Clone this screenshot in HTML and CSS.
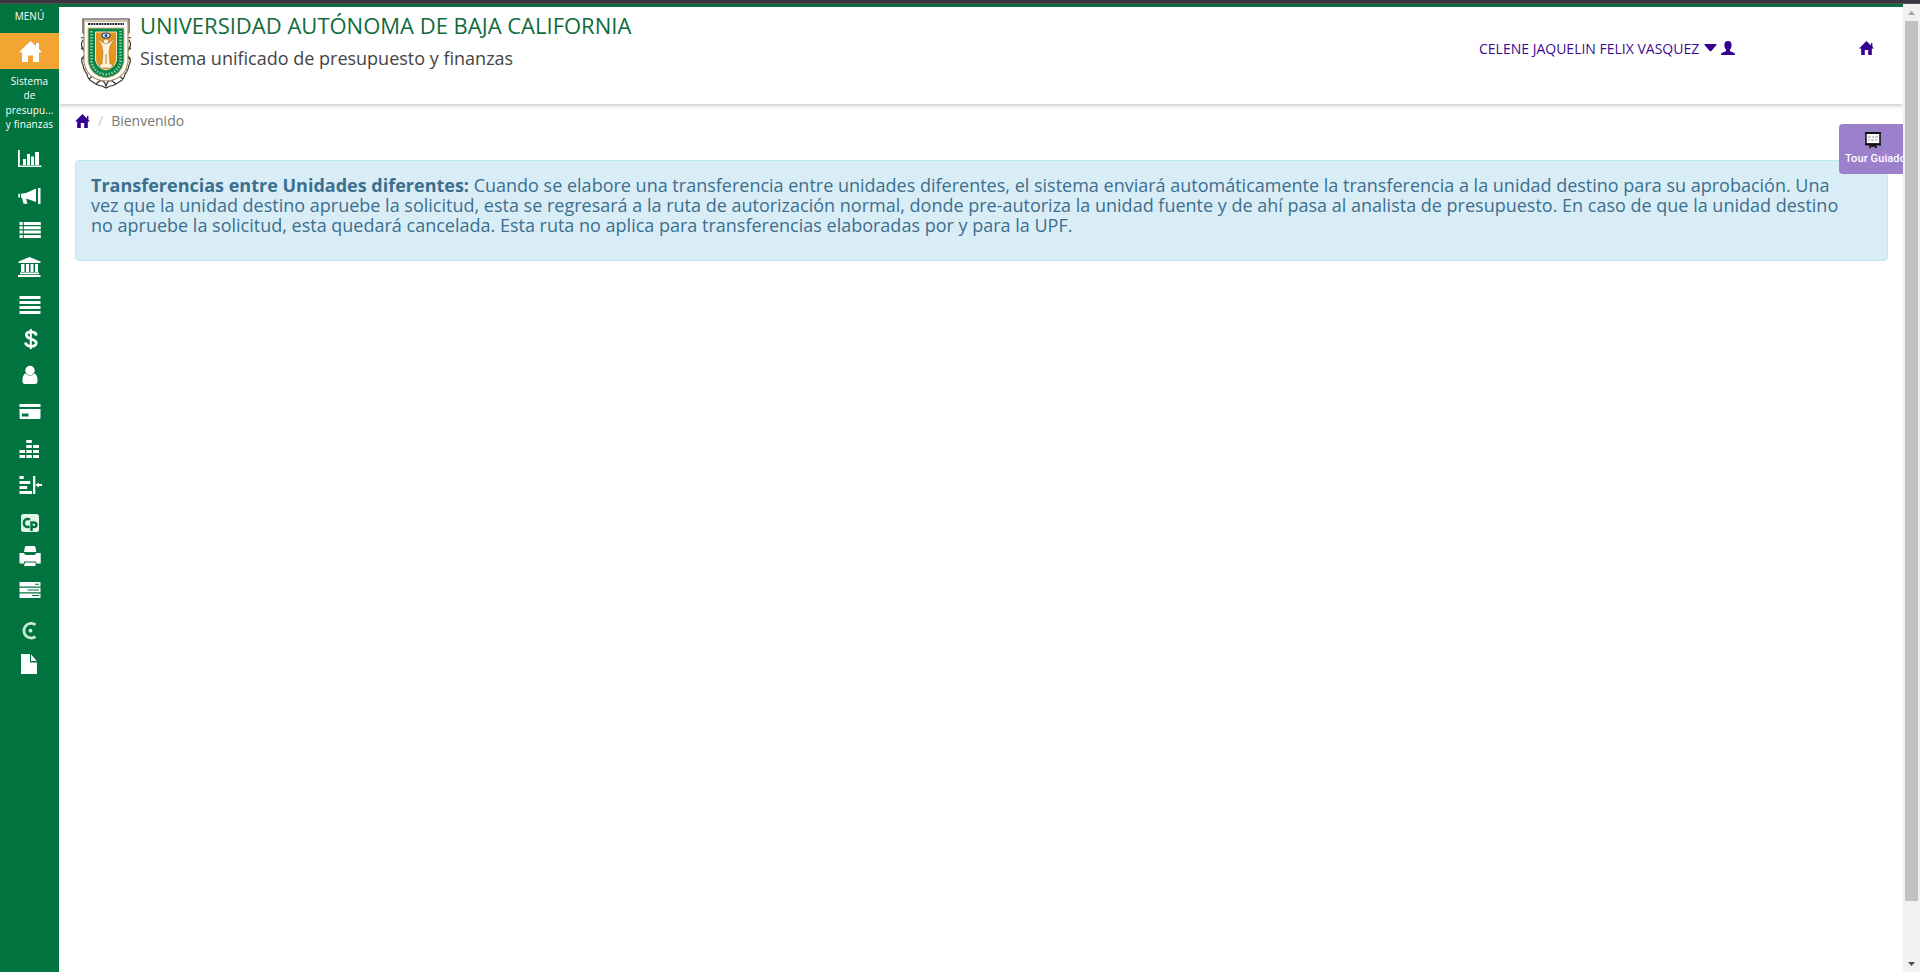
FILE: index.html
```html
<!DOCTYPE html>
<html lang="es">
<head>
<meta charset="utf-8">
<title>Sistema unificado de presupuesto y finanzas</title>
<link rel="stylesheet" href="styles.css">
</head>
<body>
<svg class="defs" aria-hidden="true">
  <symbol id="home" viewBox="0 0 15 15"><path d="M7.500 0L12 4.400V2h1.400v3.800L15 7.600H12.800V14H9.200V9H5.800v5H2.200V7.600H0z"/></symbol>
</svg>
<div class="topline"></div>
<div class="window">
  <nav class="sidebar">
    <div class="menu-label">MENÚ</div>
    <a class="active"><svg width="23" height="22" viewBox="0 0 23 22"><path d="M11.500 0L17 5.200V2h3v6l3 3.200h-3V21h-6v-6.500H9V21H3v-9.800H0z"/></svg></a>
    <div class="menu-title">Sistema<br>de<br>presupu...<br>y finanzas</div>
    <div class="icons">
      <svg viewBox="0 0 24 24"><path d="M0 4h1.800v15.500H23.500V21H0zM5 13h3v6H5zM9 8h3v11H9zM13 10.500h3V19h-3zM17 6h4v13h-4z"/></svg>
      <svg viewBox="0 0 24 24"><path d="M18 4.500V18L8 14.500l1.500 5.200H5.500L4 14H3V9.700l5-.7zM20 4h2.500v16H20zM.3 9.800H2v3.700H.3z"/></svg>
      <svg viewBox="0 0 24 24"><path d="M1.500 4h3.300v3H1.500zm0 4.300h3.300v3H1.500zm0 4.300h3.300v3H1.500zm0 4.300h3.300v3H1.500zM5.800 4h17v3h-17zm0 4.300h17v3h-17zm0 4.300h17v3h-17zm0 4.300h17v3h-17z"/></svg>
      <svg viewBox="0 0 24 24"><path d="M11.500 2L22.500 6.500V8H.5V6.500zM3 9h3.500v8H3zM8 9h3v8H8zm4.500 0h3v8h-3zM17 9h3v8h-3zM2 17.500h19v1.700H2zM0 20h22.500v2H0z"/></svg>
      <svg viewBox="0 0 24 24"><path d="M1.500 3h21v3h-21zm0 5h21v3h-21zm0 5h21v3h-21zm0 5h21v3h-21z"/></svg>
      <svg viewBox="0 0 24 24"><path class="stroke" d="M18.300 8.500C17.800 3.700 8.300 3.600 8.300 8s10 3.500 10 8-10 4.400-10.800-.5"/><path d="M11.800 2h2v20h-2z"/></svg>
      <svg viewBox="0 0 24 24"><circle cx="12" cy="7.500" r="4.700"/><path d="M7.600 10.500Q12 14.800 16.400 10.500q3.200 1 3.200 7.500 0 3-2.600 3H7q-2.600 0-2.600-3 0-6.500 3.200-7.500z"/></svg>
      <svg viewBox="0 0 24 24"><path d="M1.500 5h21v3h-21zM1.500 10h21v8.500q0 1.500-1.500 1.500H3q-1.500 0-1.500-1.500zM4 14.500v3h6.500v-3z" fill-rule="evenodd"/></svg>
      <svg viewBox="0 0 24 24"><path d="M8.300 2h5.500v3H8.300zm0 5h5.500v3H8.300zm6.700 0h6v3h-6zM1.500 12H7v3H1.500zm6.800 0h5.500v3H8.300zm6.700 0h6v3h-6zM1.500 17H7v3H1.500zm6.800 0h5.500v3H8.300zm6.700 0h6v3h-6z"/></svg>
      <svg viewBox="0 0 24 24"><path d="M1.500 2h4.200v3H1.500zm0 5h10.800v3H1.500zm0 5h7.700v3H1.500zm0 5h12.500v3H1.500zM15 2h2.300v18H15zM17.300 11l3.500-2.500V10h3.200v2h-3.200v1.500z"/></svg>
      <svg viewBox="0 0 24 24" class="cp"><rect x="3" y="3" width="18" height="18" rx="2.500"/><path d="M12 8.500C9 7 5.800 8.500 5.800 12s3 4.700 5.700 3.500M13.500 20v-8.500h2q3 0 3 2.300T15.500 16h-2"/></svg>
      <svg viewBox="0 0 24 24"><path d="M8 2h8q1.200 0 1.500 1.500L18.300 8H6l.8-4.500Q7 2 8 2zM1.500 9h4.300q1 2 2.500 2h7.600q1.500 0 2.500-2h4.300v10.500h-4.500v-2H6v2H1.500zM7 18.500h10.500V22H6z"/></svg>
      <svg viewBox="0 0 24 24"><path fill-rule="evenodd" d="M1.500 4h21v4.600h-21zm15.500 1.700v1h4v-1zM1.500 9.700h21v4.600h-21zm8 1.700v1H21v-1zM1.500 15.400h21V20h-21zm12.500 1.700v1h7v-1z"/></svg>
      <svg viewBox="0 0 24 24" class="ring"><path d="M17.500 5.800A7.300 7.300 0 1 0 17.500 17.600"/><circle cx="12.500" cy="11.700" r="1.900"/></svg>
      <svg viewBox="0 0 24 24"><path d="M3 2h9v8.500h7V22H3zM13 2.300L18.800 9H13z"/></svg>
    </div>
  </nav>
  <div class="page">
    <header class="header">
      <svg class="shield" viewBox="0 0 52 72">
        <path class="scroll" d="M3 1h46v14q-6 0-3 5 6 3 4 9-5 4-2 9 4 3 1 9-1 6-4 9-1 6-6 8-5 4-9 4l-4 2-4-2q-4 0-9-4-5-2-6-8-3-3-4-9-3-6 1-9 3-5-2-9-2-6 4-9 3-5-3-5z"/>
        <path class="scroll" d="M1 20q6-2 6 4M51 20q-6-2-6 4M1 30q7 4 2 10 6 3 3 10M51 30q-7 4-2 10-6 3-3 10M5 51q7 0 7 7 6-2 8 5 4-2 6 5 2-7 6-5 2-7 8-5 0-7 7-7M9 61l5-4M43 61l-5-4M16 66l5-4M36 66l-5-4"/>
        <path class="outer" d="M4 3h44v41Q45 62 26 63 7 62 4 44z"/>
        <path class="lettering" d="M8 6h36"/>
        <path class="green" d="M8 10h36v34Q41 58 26 60 11 58 8 44z"/>
        <path class="band" d="M11.500 13v31Q14 55 26 56.500 38 55 40.500 44V13"/>
        <path class="gold" d="M15.500 14h21v28Q35 50 26 52 17 50 15.500 42z"/>
        <path class="figure" d="M17 20l6 5h6l6-5-5 8-1 7 1 11h2v4H20v-4h2l1-11-1-7z"/>
        <path class="figure-line" d="M26 36v10"/>
        <circle class="figure" cx="26" cy="23.500" r="2.500"/>
        <ellipse class="eye" cx="26" cy="17.500" rx="4" ry="2.500"/>
        <circle class="eye-dot" cx="26" cy="17.500" r="1.500"/>
      </svg>
      <div class="brand"><h1>UNIVERSIDAD AUTÓNOMA DE BAJA CALIFORNIA</h1><h2>Sistema unificado de presupuesto y finanzas</h2></div>
      <div class="user"><span class="user-name">CELENE JAQUELIN FELIX VASQUEZ</span><svg width="13" height="8" viewBox="0 0 13 8"><path d="M1 0h11q1 0 .5 1L7.300 7q-.8.700-1.600 0L.5 1Q0 0 1 0z"/></svg><svg width="14" height="14" viewBox="0 0 14 14"><path d="M7 0q3.600 0 3.600 4 0 3-1.600 4.700v1.500l4 1.500q1 .4 1 2.300H0q0-1.900 1-2.300l4-1.500V8.700Q3.400 7 3.400 4 3.400 0 7 0z"/></svg></div>
      <svg class="home" width="15" height="15"><use href="#home"/></svg>
    </header>
    <main>
      <div class="crumbs"><svg width="15" height="15"><use href="#home"/></svg><i>/</i><span>Bienvenido</span></div>
      <div class="alert"><b>Transferencias entre Unidades diferentes:</b> Cuando se elabore una transferencia entre unidades diferentes, el sistema enviará automáticamente la transferencia a la unidad destino para su aprobación. Una<br>vez que la unidad destino apruebe la solicitud, esta se regresará a la ruta de autorización normal, donde pre-autoriza la unidad fuente y de ahí pasa al analista de presupuesto. En caso de que la unidad destino<br>no apruebe la solicitud, esta quedará cancelada. Esta ruta no aplica para transferencias elaboradas por y para la UPF.</div>
    </main>
    <div class="tour">
      <svg width="16" height="17" viewBox="0 0 16 17"><path class="board" d="M1 1h14v11H1z"/><path class="chalk" d="M3 5h3m1 0h2m1 0h3M3 8h2m1 0h3m1 0h2"/><path class="legs" d="M0 1h16M0 12.500h16M6.500 13L4.500 16M9.500 13l2 3M8 12v3"/></svg>
      <span>Tour Guiado</span>
    </div>
  </div>
  <div class="scrollbar"><svg width="7" height="5" viewBox="0 0 7 5"><path d="M3.500 0L7 4H0z"/></svg><div class="thumb"></div><svg class="down" width="7" height="5" viewBox="0 0 7 5"><path d="M0 0h7L3.500 4z"/></svg></div>
</div>
</body>
</html>
```
FILE: styles.css
```css
* { box-sizing: border-box; }
body { margin: 0; height: 972px; overflow: hidden; display: flex; flex-direction: column; font-family: "Open Sans", sans-serif; background: #fff; }
svg { display: block; flex: none; }
.defs { position: absolute; width: 0; height: 0; }
.topline { height: 4px; background: #3b3440; border-bottom: 1px solid #4b5650; flex: none; }
.window { flex: 1; display: flex; min-height: 0; }

.sidebar { width: 59px; flex: none; background: #00733e; color: #fff; text-align: center; }
.menu-label { height: 29px; font-size: 10px; line-height: 25px; }
.active { display: flex; height: 36px; background: #f2a531; fill: #fff; padding: 8px 0 0 19px; }
.menu-title { height: 77px; padding-top: 5px; font-size: 10px; line-height: 14.400px; letter-spacing: .1px; white-space: nowrap; }
.icons { display: grid; padding-left: 18px; grid-template-rows: 38px 34px 37px 38px 34px 36px 36px 39px 36px 37px 33px 34px 41px 33px 24px; fill: #fff; }
.icons svg { width: 24px; height: 24px; }
.stroke { fill: none; stroke: #fff; stroke-width: 2.800; }
.cp { fill: #e3f5e9; }
.cp path { fill: none; stroke: #00733e; stroke-width: 2.500; }
.ring { fill: #c9ecd6; }
.ring path { fill: none; stroke: #c9ecd6; stroke-width: 2.800; }

.page { position: relative; flex: 1; min-width: 0; overflow: hidden; }
.header { height: 100px; border-top: 3px solid #0b6e40; display: flex; background: #fff; box-shadow: 0 1px 5px rgba(0,0,0,.28); }
.shield { width: 52px; height: 72px; margin: 11px 0 0 21px; }
.scroll { fill: #fff; stroke: #333; stroke-width: 1.200; }
.outer { fill: #fff; stroke: #a98c5c; stroke-width: 1.200; }
.lettering { stroke: #222; stroke-width: 2; stroke-dasharray: 2 .7; }
.green { fill: #08834a; stroke: #d8b878; stroke-width: 1; }
.band { fill: none; stroke: #8dd0a6; stroke-width: 2.500; stroke-dasharray: 1.500 1.500; }
.gold { fill: #e6951c; stroke: #f5e4b8; stroke-width: 1; }
.figure { fill: #fff3dc; stroke: #9b6a20; stroke-width: .5; }
.figure-line { stroke: #b98235; stroke-width: 1; }
.eye { fill: #fff; stroke: #1c4384; stroke-width: 1.200; }
.eye-dot { fill: #1c4384; }
.brand { margin-left: 8px; width: 600px; white-space: nowrap; }
h1, h2 { margin: 0; font-weight: 400; }
h1 { color: #0f6b3c; font-size: 22px; line-height: 30px; margin-top: 3px; }
h2 { color: #444; font-size: 18px; line-height: 24px; margin-top: 6px; }
.user { margin: 31px 0 0 auto; display: flex; height: 20px; align-items: center; color: #3b0b8f; fill: #35008f; font-size: 14px; }
.user-name { width: 221px; margin-right: 4px; white-space: nowrap; }
.user svg + svg { margin-left: 4px; }
.home { fill: #35008f; margin: 34px 29px 0 124px; }

main { padding: 7px 15px 0 16px; }
.crumbs { height: 20px; display: flex; align-items: center; font-size: 14px; line-height: 20px; color: #777; fill: #35008f; }
.crumbs i { font-style: normal; color: #ccc; margin: 0 8px; }
.alert { margin-top: 29px; height: 101px; padding: 14px 15px; border: 1px solid #bce8f1; border-radius: 4px; background: #d9edf7; color: #3c6f8e; font-size: 18px; line-height: 20px; white-space: nowrap; }
.tour { position: absolute; top: 120px; right: 0; width: 64px; height: 50px; overflow: hidden; padding: 8px 0 0 6px; border-radius: 4px 0 0 4px; background: #9c80cb; color: #fff; font: 500 11px/16px Roboto, sans-serif; letter-spacing: .12px; white-space: nowrap; }
.tour svg { margin: 0 0 2px 20px; }
.board { fill: #fff; stroke: #111; stroke-width: 1.500; }
.chalk { stroke: #999; stroke-width: 1; }
.legs { stroke: #111; stroke-width: 1.800; }

.scrollbar { width: 17px; flex: none; background: #f1f1f1; display: flex; flex-direction: column; align-items: center; padding-top: 7px; fill: #a3a3a3; }
.thumb { width: 13px; height: 880px; margin-top: 5px; background: #c1c1c1; }
.down { margin-top: 61px; fill: #505050; }
```
